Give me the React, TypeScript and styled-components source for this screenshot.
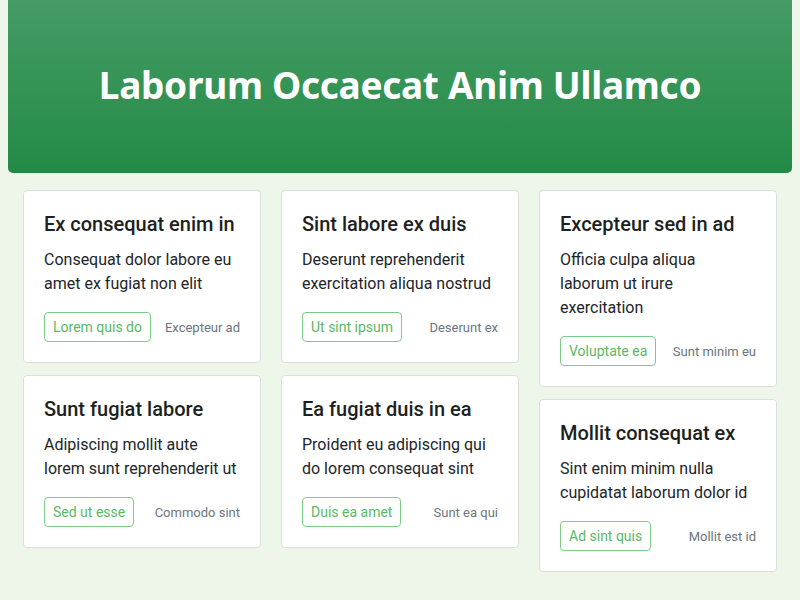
import React from "react";
import styled, { createGlobalStyle } from "styled-components";

const Global = createGlobalStyle`
  html, body { margin: 0; padding: 0; background: #eef6ea; }
  body { font-family: Roboto, "Noto Sans", sans-serif; color: #212529; }
`;

const Page = styled.div`
  padding: 0 8px 8px;
`;

const Header = styled.header`
  height: 173px;
  box-sizing: border-box;
  padding-bottom: 4px;
  display: flex;
  align-items: center;
  justify-content: center;
  background: linear-gradient(to bottom, #459c65, #238a46);
  border-radius: 0 0 5px 5px;
`;

const Title = styled.h1`
  margin: 0;
  color: #fff;
  font-family: "Noto Sans", "Open Sans", sans-serif;
  font-size: 37px;
  font-weight: 700;
  letter-spacing: -0.3px;
`;

const Grid = styled.div`
  display: grid;
  grid-template-columns: repeat(3, 1fr);
  gap: 20px;
  padding: 17px 15px 0 15px;
  align-items: start;
`;

const Column = styled.div`
  display: flex;
  flex-direction: column;
  gap: 12px;
`;

const Card = styled.div`
  background: #fff;
  border: 1px solid #dcdfdc;
  border-radius: 4px;
  padding: 21px 20px 20px 20px;
`;

const CardTitle = styled.h2`
  margin: 0;
  font-size: 20px;
  font-weight: 500;
  line-height: 24px;
  color: #1d1f21;
`;

const CardText = styled.p`
  margin: 12px 0 16px;
  font-size: 16px;
  line-height: 24px;
  color: #212529;
`;

const Footer = styled.div`
  display: flex;
  align-items: center;
  justify-content: space-between;
`;

const OutlineButton = styled.button`
  font-family: inherit;
  background: #fff;
  border: 1px solid #7ccb87;
  border-radius: 4px;
  color: #5bb866;
  font-size: 14px;
  line-height: 20px;
  padding: 4px 8px;
  cursor: pointer;
`;

const Muted = styled.span`
  font-size: 13px;
  color: #6c757d;
`;

type Item = { title: string; text: string; button: string; note: string };

const columns: Item[][] = [
  [
    { title: "Ex consequat enim in", text: "Consequat dolor labore eu amet ex fugiat non elit", button: "Lorem quis do", note: "Excepteur ad" },
    { title: "Sunt fugiat labore", text: "Adipiscing mollit aute lorem sunt reprehenderit ut", button: "Sed ut esse", note: "Commodo sint" },
  ],
  [
    { title: "Sint labore ex duis", text: "Deserunt reprehenderit exercitation aliqua nostrud", button: "Ut sint ipsum", note: "Deserunt ex" },
    { title: "Ea fugiat duis in ea", text: "Proident eu adipiscing qui do lorem consequat sint", button: "Duis ea amet", note: "Sunt ea qui" },
  ],
  [
    { title: "Excepteur sed in ad", text: "Officia culpa aliqua laborum ut irure exercitation", button: "Voluptate ea", note: "Sunt minim eu" },
    { title: "Mollit consequat ex", text: "Sint enim minim nulla cupidatat laborum dolor id", button: "Ad sint quis", note: "Mollit est id" },
  ],
];

export default function App() {
  return (
    <Page>
      <Global />
      <Header>
        <Title>Laborum Occaecat Anim Ullamco</Title>
      </Header>
      <Grid>
        {columns.map((col, i) => (
          <Column key={i}>
            {col.map((c) => (
              <Card key={c.title}>
                <CardTitle>{c.title}</CardTitle>
                <CardText>{c.text}</CardText>
                <Footer>
                  <OutlineButton>{c.button}</OutlineButton>
                  <Muted>{c.note}</Muted>
                </Footer>
              </Card>
            ))}
          </Column>
        ))}
      </Grid>
    </Page>
  );
}
